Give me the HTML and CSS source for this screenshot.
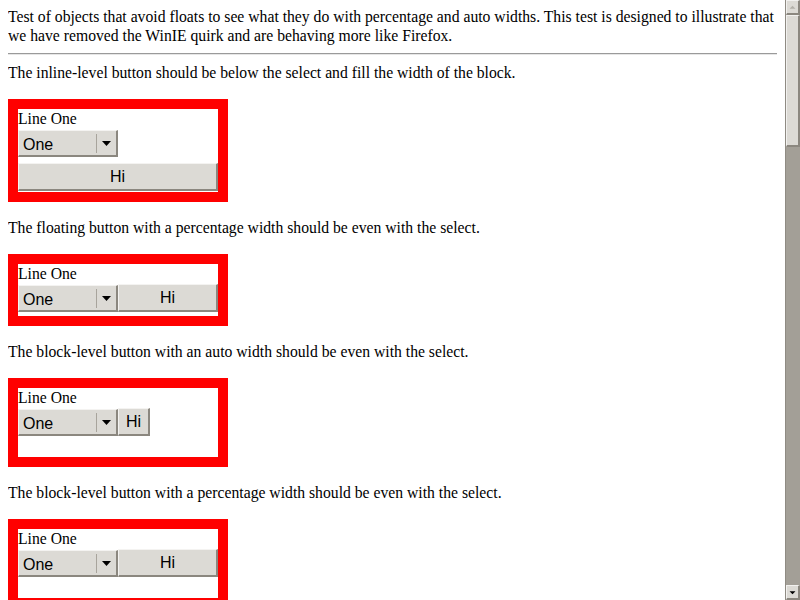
FILE: index.html
```html
<!DOCTYPE html>
<html>
<head>
<meta charset="utf-8">
<title>Float avoidance with percentage and auto widths</title>
<link rel="stylesheet" href="styles.css">
</head>
<body>
<div class="intro">Test of objects that avoid floats to see what they do with percentage and auto widths. This test is designed to illustrate that we have removed the WinIE quirk and are behaving more like Firefox.</div>
<hr>

<p class="desc first">The inline-level button should be below the select and fill the width of the block.</p>
<div class="box">
  <div class="line">Line One</div>
  <div class="select"><span class="sel-text">One</span><span class="sel-btn"><svg width="9" height="5" viewBox="0 0 9 5"><polygon points="0,0 9,0 4.5,5" fill="#000"/></svg></span></div>
  <button class="btn full">Hi</button>
</div>

<p class="desc">The floating button with a percentage width should be even with the select.</p>
<div class="box">
  <div class="line">Line One</div>
  <div class="row">
    <div class="select"><span class="sel-text">One</span><span class="sel-btn"><svg width="9" height="5" viewBox="0 0 9 5"><polygon points="0,0 9,0 4.5,5" fill="#000"/></svg></span></div>
    <button class="btn half">Hi</button>
  </div>
</div>

<p class="desc">The block-level button with an auto width should be even with the select.</p>
<div class="box tall">
  <div class="line">Line One</div>
  <div class="row">
    <div class="select"><span class="sel-text">One</span><span class="sel-btn"><svg width="9" height="5" viewBox="0 0 9 5"><polygon points="0,0 9,0 4.5,5" fill="#000"/></svg></span></div>
    <button class="btn">Hi</button>
  </div>
</div>

<p class="desc">The block-level button with a percentage width should be even with the select.</p>
<div class="box tall">
  <div class="line">Line One</div>
  <div class="row">
    <div class="select"><span class="sel-text">One</span><span class="sel-btn"><svg width="9" height="5" viewBox="0 0 9 5"><polygon points="0,0 9,0 4.5,5" fill="#000"/></svg></span></div>
    <button class="btn half">Hi</button>
  </div>
</div>

<div class="scrollbar" aria-hidden="true">
  <div class="sb-btn"><svg width="13" height="13" viewBox="0 0 13 13"><polygon points="3,8 10,8 6.5,4.5" fill="#b3b0a9"/></svg></div>
  <div class="sb-thumb"></div>
  <div class="sb-track"></div>
  <div class="sb-btn"><svg width="13" height="13" viewBox="0 0 13 13"><polygon points="3,5 10,5 6.5,8.5" fill="#000"/></svg></div>
</div>
</body>
</html>
```

FILE: styles.css
```css
html {
  background: #ffffff;
}

body {
  margin: 8px 23px 8px 8px;
  font-family: "Liberation Serif", "Times New Roman", serif;
  font-size: 15.7px;
  color: #000000;
}

.intro {
  line-height: 18.5px;
}

hr {
  margin: 8px 0;
  height: 0;
  border: 0;
  border-top: 1px solid #9a9a9a;
  border-bottom: 1px solid #e6e6e6;
}

.desc {
  margin: 16px 0 17px;
  line-height: 19px;
}

.desc.first {
  margin-top: 8px;
}

.box {
  width: 200px;
  border: 10px solid #ff0000;
  background: #ffffff;
  padding-bottom: 1px;
}

.box.tall {
  padding-bottom: 0;
}

.line {
  line-height: 19px;
  height: 19px;
}

.row {
  display: flex;
  align-items: flex-start;
  padding-bottom: 3px;
}

.box.tall .row {
  padding-bottom: 21px;
}

.select {
  box-sizing: border-box;
  width: 100px;
  height: 27px;
  margin-top: 2px;
  display: flex;
  align-items: center;
  background: #dcdad5;
  border-style: solid;
  border-width: 1px 2px 2px 1px;
  border-color: #f4f3f1 #8b877f #8b877f #f4f3f1;
  font-family: "Liberation Sans", Arial, sans-serif;
  font-size: 16px;
  flex: none;
}

.sel-text {
  flex: 1;
  padding-left: 4px;
  padding-top: 3px;
  line-height: 18px;
}

.sel-btn {
  width: 20px;
  height: 19px;
  margin-top: 1px;
  box-sizing: border-box;
  border-left: 1px solid #a8a49c;
  display: flex;
  align-items: center;
  justify-content: center;
}

.sel-btn svg {
  display: block;
}

.btn {
  box-sizing: border-box;
  height: 28px;
  margin: 1px 0 0;
  padding: 0 7px;
  display: flex;
  align-items: center;
  justify-content: center;
  background: #dcdad5;
  border-style: solid;
  border-width: 1px 2px 2px 1px;
  border-color: #f4f3f1 #8b877f #8b877f #f4f3f1;
  border-radius: 0;
  font-family: "Liberation Sans", Arial, sans-serif;
  font-size: 16px;
  color: #000000;
  flex: none;
}

.btn.full {
  width: 100%;
  margin-top: 6px;
}

.btn.half {
  width: 100px;
}

.scrollbar {
  position: fixed;
  top: 0;
  right: 0;
  width: 15px;
  height: 600px;
  display: flex;
  flex-direction: column;
  background: #a39f97;
  border-left: 1px solid #8f8b83;
  box-sizing: border-box;
}

.sb-btn {
  flex: none;
  box-sizing: border-box;
  height: 15px;
  display: flex;
  align-items: center;
  justify-content: center;
  background: #dcdad5;
  border-style: solid;
  border-width: 1px 2px 2px 1px;
  border-color: #f2f1ef #8b877f #8b877f #f2f1ef;
}

.sb-btn svg {
  display: block;
}

.sb-thumb {
  flex: none;
  box-sizing: border-box;
  height: 132px;
  background: #dcdad5;
  border-style: solid;
  border-width: 1px 2px 2px 1px;
  border-color: #f2f1ef #8b877f #8b877f #f2f1ef;
}

.sb-track {
  flex: 1;
}
```
